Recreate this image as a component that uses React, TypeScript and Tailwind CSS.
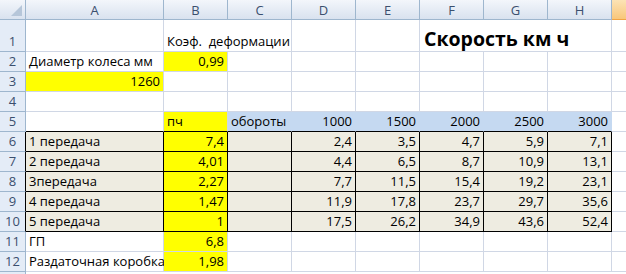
const cols = ["A", "B", "C", "D", "E", "F", "G", "H"];

const speeds = [
  ["2,4", "3,5", "4,7", "5,9", "7,1"],
  ["4,4", "6,5", "8,7", "10,9", "13,1"],
  ["7,7", "11,5", "15,4", "19,2", "23,1"],
  ["11,9", "17,8", "23,7", "29,7", "35,6"],
  ["17,5", "26,2", "34,9", "43,6", "52,4"],
];

const gears = [
  ["1 передача", "7,4"],
  ["2 передача", "4,01"],
  ["3передача", "2,27"],
  ["4 передача", "1,47"],
  ["5 передача", "1"],
];

type CellProps = {
  children?: React.ReactNode;
  className?: string;
};

// plain grid cell: light gridlines on right and bottom
function Cell({ children, className = "" }: CellProps) {
  return (
    <div
      className={`relative flex items-end whitespace-nowrap border-r border-b border-[#d0d7e5] px-[3px] pb-[1px] ${className}`}
    >
      {children}
    </div>
  );
}

function RowHead({ n, dark }: { n: number; dark?: boolean }) {
  return (
    <div
      className={`flex items-end justify-center border-b border-[#9eb6ce] bg-[#e4ecf7] pb-[1px] text-[#3b4f6e] border-r ${
        dark ? "border-r-black" : "border-r-[#9eb6ce]"
      }`}
    >
      {n}
    </div>
  );
}

export default function App() {
  return (
    <div
      className="grid h-[274px] w-[626px] overflow-hidden bg-white text-[13px] leading-[18px] text-black"
      style={{ fontFamily: '"Open Sans", "Liberation Sans", sans-serif' }}
    >
      <div className="grid grid-cols-[26px_138px_repeat(7,64px)_1fr] grid-rows-[20px_32px_repeat(11,20px)_1fr]">
        {/* column headers */}
        <div className="relative border-r border-b border-[#9eb6ce] bg-gradient-to-b from-[#f3f6fb] to-[#d9e2ef]">
          <svg className="absolute right-[3px] bottom-[3px]" width="11" height="11" viewBox="0 0 11 11">
            <polygon points="11,0 11,11 0,11" fill="#b6c6d9" />
          </svg>
        </div>
        {cols.map((c) => (
          <div
            key={c}
            className="flex items-center justify-center border-r border-b border-[#9eb6ce] bg-gradient-to-b from-[#f3f6fb] to-[#d9e2ef] text-[#3b4f6e]"
          >
            {c}
          </div>
        ))}
        <div className="border-b border-[#f2a445] bg-gradient-to-b from-[#fce3b5] to-[#f8c77a]" />

        {/* row 1: overflowing labels hide the gridlines they cross */}
        <RowHead n={1} />
        <Cell />
        <Cell className="border-r-0">
          <span className="absolute bottom-[1px] left-[3px] z-10">Коэф.&nbsp; деформации</span>
        </Cell>
        <Cell />
        <Cell />
        <Cell />
        <Cell className="border-r-0">
          <span className="absolute bottom-0 left-[4px] z-10 text-[19.5px] font-bold leading-[24px]">
            Скорость км ч
          </span>
        </Cell>
        <Cell className="border-r-0" />
        <Cell />
        <Cell className="border-r-0" />

        {/* row 2 */}
        <RowHead n={2} />
        <Cell>Диаметр колеса мм</Cell>
        <Cell className="justify-end bg-[#ffff00]">0,99</Cell>
        <Cell />
        <Cell />
        <Cell />
        <Cell />
        <Cell />
        <Cell />
        <Cell className="border-r-0" />

        {/* row 3 */}
        <RowHead n={3} />
        <Cell className="justify-end bg-[#ffff00]">1260</Cell>
        <Cell />
        <Cell />
        <Cell />
        <Cell />
        <Cell />
        <Cell />
        <Cell />
        <Cell className="border-r-0" />

        {/* row 4 */}
        <RowHead n={4} />
        {cols.map((c) => (
          <Cell key={c} />
        ))}
        <Cell className="border-r-0" />

        {/* row 5: header band */}
        <RowHead n={5} />
        <Cell className="border-b-black" />
        <Cell className="border-b-black bg-[#ffff00]">пч</Cell>
        <Cell className="border-r-[#c5d9f1] border-b-black bg-[#c5d9f1]">обороты</Cell>
        {["1000", "1500", "2000", "2500", "3000"].map((v) => (
          <Cell key={v} className="justify-end border-r-[#c5d9f1] border-b-black bg-[#c5d9f1]">
            {v}
          </Cell>
        ))}
        <Cell className="border-r-0" />

        {/* rows 6-10: gears and speeds */}
        {gears.map(([name, ratio], i) => (
          <div key={name} className="contents">
            <RowHead n={6 + i} dark />
            <Cell className="border-r-black border-b-black bg-[#eeece1]">{name}</Cell>
            <Cell className="justify-end border-r-black border-b-black bg-[#ffff00]">{ratio}</Cell>
            <Cell className="border-r-black border-b-black bg-[#eeece1]" />
            {speeds[i].map((v, j) => (
              <Cell key={j} className="justify-end border-r-black border-b-black bg-[#eeece1]">
                {v}
              </Cell>
            ))}
            <Cell className="border-r-0" />
          </div>
        ))}

        {/* rows 11-12 */}
        <RowHead n={11} />
        <Cell>ГП</Cell>
        <Cell className="justify-end bg-[#ffff00]">6,8</Cell>
        {cols.slice(2).map((c) => (
          <Cell key={c} />
        ))}
        <Cell className="border-r-0" />

        <RowHead n={12} />
        <Cell>Раздаточная коробка</Cell>
        <Cell className="justify-end bg-[#ffff00]">1,98</Cell>
        {cols.slice(2).map((c) => (
          <Cell key={c} />
        ))}
        <Cell className="border-r-0" />

        <div className="border-r border-[#9eb6ce] bg-[#e4ecf7]" />
        <div className="col-span-9" />
      </div>
    </div>
  );
}
